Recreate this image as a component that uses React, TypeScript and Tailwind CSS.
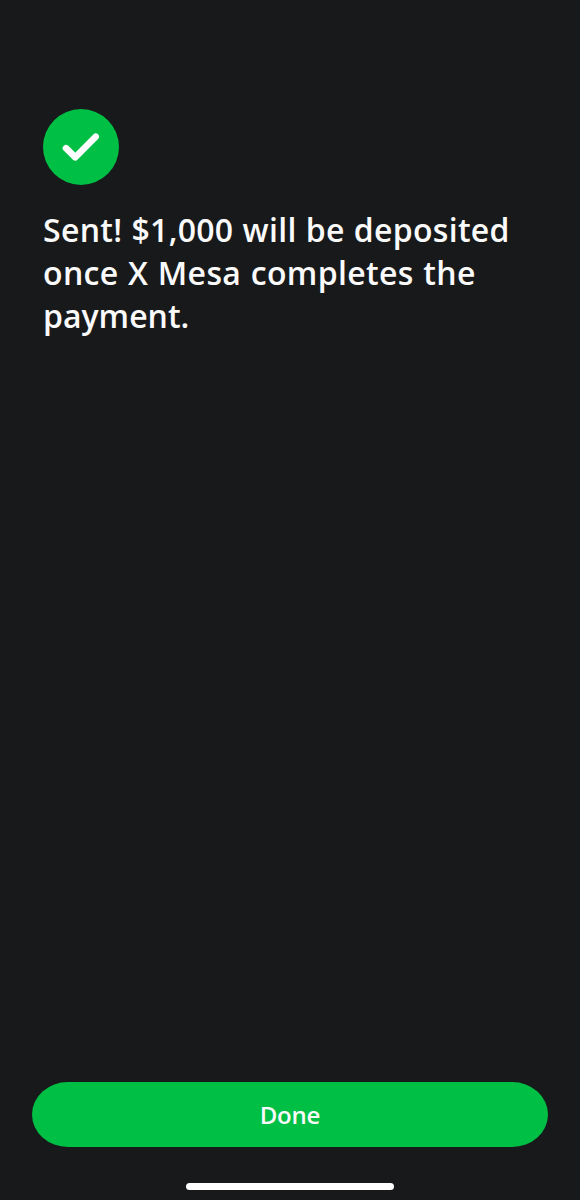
import React from "react";

export default function App() {
  return (
    <main className="flex h-[1200px] w-[580px] flex-col bg-[#18191b] font-['Open_Sans','Noto_Sans',sans-serif] text-[#fafafa]">
      <section className="flex flex-col px-[43px] pt-[109px]">
        <div className="flex size-[76px] items-center justify-center rounded-full bg-[#00bf45]">
          <svg className="size-[76px]" viewBox="0 0 76 76" fill="none">
            <path d="M23 39.2L32.3 48.3L52.7 27.7" stroke="white" strokeWidth="6.6" strokeLinecap="round" strokeLinejoin="round" />
          </svg>
        </div>
        <h1 className="mt-[23px] text-[32px] leading-[43px] font-semibold whitespace-nowrap">
          <span className="block tracking-[0.3px] [word-spacing:0.5px]">Sent! $1,000 will be deposited</span>
          <span className="block tracking-[0.35px] [word-spacing:0.8px]">once X Mesa completes the</span>
          <span className="block">payment.</span>
        </h1>
      </section>
      <footer className="mt-auto flex flex-col items-center px-8 pb-[10px]">
        <button className="h-[65px] w-full rounded-[36px/32.5px] bg-[#00bf45] text-2xl font-semibold tracking-[-0.2px]">Done</button>
        <div className="mt-9 h-[7px] w-[208px] rounded-full bg-white" />
      </footer>
    </main>
  );
}
